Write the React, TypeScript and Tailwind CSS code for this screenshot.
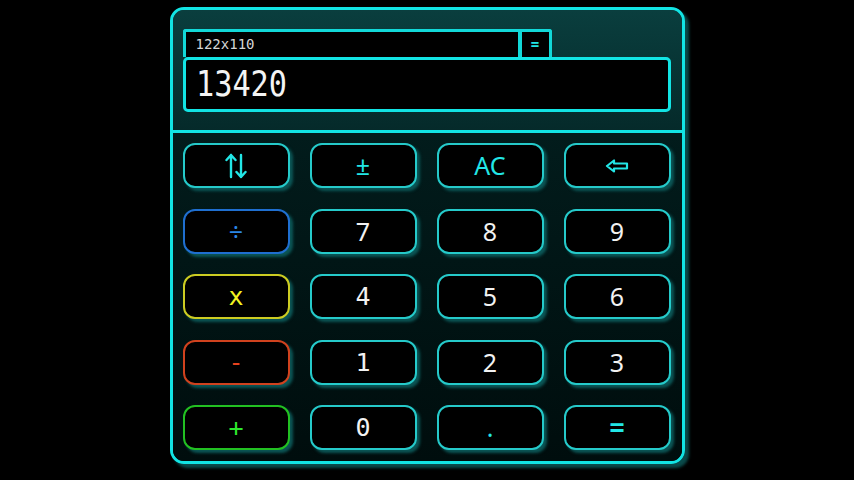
import React from "react";

const mono = { fontFamily: '"DejaVu Sans Mono", "Liberation Mono", monospace' };
const sans = { fontFamily: '"Noto Sans", "Open Sans", sans-serif' };

type Key = {
  label: React.ReactNode;
  border: string;
  text: string;
  font: "mono" | "sans";
};

const UpDown = () => (
  <svg width="22" height="26" viewBox="0 0 22 26" fill="none" stroke="#22e6e6" strokeWidth="2.4" strokeLinecap="round" strokeLinejoin="round">
    <path d="M6 24V2M1.5 7L6 2l4.5 5" />
    <path d="M16 2v22M11.5 19l4.5 5 4.5-5" />
  </svg>
);

const BackArrow = () => (
  <svg width="24" height="14" viewBox="0 0 24 14" fill="none" stroke="#22e6e6" strokeWidth="2.2" strokeLinejoin="round">
    <path d="M2 7L9 1.5V4.5H22V9.5H9V12.5Z" />
  </svg>
);

const cyanB = "border-[#25caca]";
const keys: Key[] = [
  { label: <UpDown />, border: cyanB, text: "text-[#22e6e6]", font: "sans" },
  { label: "±", border: cyanB, text: "text-[#22e6e6]", font: "sans" },
  { label: "AC", border: cyanB, text: "text-[#22e6e6]", font: "sans" },
  { label: <BackArrow />, border: cyanB, text: "text-[#22e6e6]", font: "sans" },
  { label: "÷", border: "border-[#1f6fd0]", text: "text-[#2b86e6]", font: "sans" },
  { label: "7", border: cyanB, text: "text-[#f2f2f2]", font: "sans" },
  { label: "8", border: cyanB, text: "text-[#f2f2f2]", font: "sans" },
  { label: "9", border: cyanB, text: "text-[#f2f2f2]", font: "sans" },
  { label: "x", border: "border-[#cccc22]", text: "text-[#f2f222]", font: "mono" },
  { label: "4", border: cyanB, text: "text-[#f2f2f2]", font: "mono" },
  { label: "5", border: cyanB, text: "text-[#f2f2f2]", font: "sans" },
  { label: "6", border: cyanB, text: "text-[#f2f2f2]", font: "sans" },
  { label: "-", border: "border-[#d0421e]", text: "text-[#e6421e]", font: "mono" },
  { label: "1", border: cyanB, text: "text-[#f2f2f2]", font: "mono" },
  { label: "2", border: cyanB, text: "text-[#f2f2f2]", font: "sans" },
  { label: "3", border: cyanB, text: "text-[#f2f2f2]", font: "sans" },
  { label: "+", border: "border-[#22c022]", text: "text-[#2ee82e]", font: "mono" },
  { label: "0", border: cyanB, text: "text-[#f2f2f2]", font: "mono" },
  { label: ".", border: cyanB, text: "text-[#22e6e6]", font: "sans" },
  { label: "=", border: cyanB, text: "text-[#22e6e6] font-bold", font: "mono" },
];

export default function App() {
  return (
    <div className="w-[854px] h-[480px] bg-black overflow-hidden">
      <div className="mx-auto mt-[7px] w-[515px] h-[457px] rounded-[14px] border-[3px] border-[#12e4e4] bg-gradient-to-b from-[#0a3e3e] via-[#031b1b] to-[#000c0c] shadow-[4px_4px_3px_#0a4a4a] flex flex-col overflow-hidden">
        {/* header */}
        <div className="h-[120px] px-[10px] pt-[19px] flex flex-col bg-gradient-to-b from-[#0a3e3e] to-[#052a2a]">
          <div className="w-[369px] h-[28px] flex border-[3px] border-b-0 border-[#12d8d8] rounded-t-[3px] bg-black">
            <div className="flex-1 pl-[10px] text-[14px] leading-[24px] text-[#d6d6d6]" style={mono}>
              122x110
            </div>
            <div className="w-[31px] border-l-[4px] border-[#12d8d8] flex items-center justify-center text-[#22e6e6] text-[14px] font-bold" style={mono}>
              =
            </div>
          </div>
          <div className="w-[488px] h-[55px] border-[3px] border-[#12e4e4] rounded-[5px] bg-black pl-[10px] flex items-center">
            <span
              className="inline-block origin-left scale-x-[0.84] text-[36px] leading-none text-[#f4f4f4] tracking-[0px] -mt-[2px]"
              style={mono}
            >
              13420
            </span>
          </div>
        </div>
        {/* divider */}
        <div className="h-[3px] bg-[#12e4e4] shrink-0" />
        {/* keypad */}
        <div className="flex-1 bg-gradient-to-b from-[#021c1c] to-[#000d0d] pt-[10px] px-[10px] grid grid-cols-[107px_107px_107px_107px] auto-rows-[45px] gap-x-[20px] gap-y-[20.5px] content-start">
          {keys.map((k, i) => (
            <div
              key={i}
              className={`rounded-[12px] border-2 ${k.border} bg-black shadow-[3px_3px_3px_#0b5656] flex items-center justify-center text-[25px] leading-none ${k.text}`}
              style={k.font === "mono" ? mono : sans}
            >
              {k.label}
            </div>
          ))}
        </div>
      </div>
    </div>
  );
}
